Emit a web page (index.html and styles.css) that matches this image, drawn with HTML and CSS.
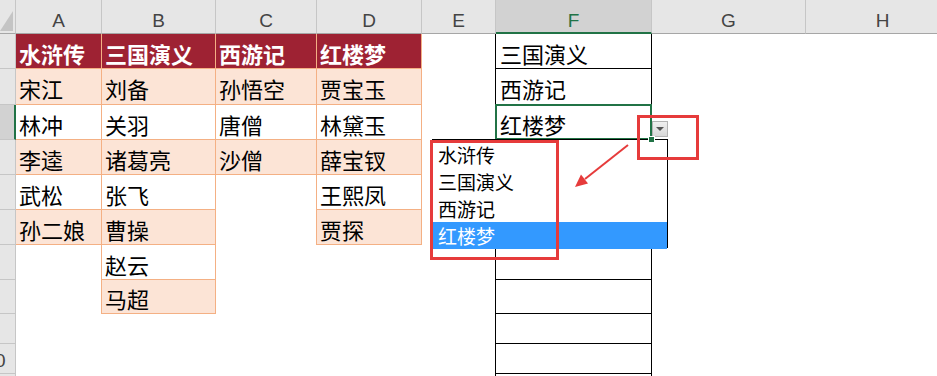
FILE: index.html
```html
<!DOCTYPE html>
<html lang="zh">
<head>
<meta charset="utf-8">
<link rel="stylesheet" href="styles.css">
</head>
<body>
<div class="page">
  <div class="sheet">
    <!-- column headers -->
    <div class="corner"><span class="tri"></span></div>
    <div class="ch">A</div><div class="ch">B</div><div class="ch">C</div><div class="ch">D</div><div class="ch">E</div><div class="ch sel">F</div><div class="ch">G</div><div class="ch">H</div>

    <!-- row 1 -->
    <div class="rh"></div>
    <div class="c hd">水浒传</div><div class="c hd">三国演义</div><div class="c hd">西游记</div><div class="c hd">红楼梦</div>
    <div class="c ef"></div><div class="c f">三国演义</div><div class="c"></div><div class="c"></div>

    <!-- row 2 -->
    <div class="rh"></div>
    <div class="c pe">宋江</div><div class="c pe">刘备</div><div class="c pe">孙悟空</div><div class="c pe">贾宝玉</div>
    <div class="c ef"></div><div class="c f">西游记</div><div class="c"></div><div class="c"></div>

    <!-- row 3 -->
    <div class="rh rsel"></div>
    <div class="c wh">林冲</div><div class="c wh">关羽</div><div class="c wh">唐僧</div><div class="c wh">林黛玉</div>
    <div class="c ef"></div><div class="c f act">红楼梦</div><div class="c"></div><div class="c"></div>

    <!-- row 4 -->
    <div class="rh"></div>
    <div class="c pe">李逵</div><div class="c pe">诸葛亮</div><div class="c pe">沙僧</div><div class="c pe">薛宝钗</div>
    <div class="c ef"></div><div class="c f"></div><div class="c"></div><div class="c"></div>

    <!-- row 5 -->
    <div class="rh"></div>
    <div class="c wh">武松</div><div class="c wh">张飞</div><div class="c vr"></div><div class="c wh">王熙凤</div>
    <div class="c ef"></div><div class="c f"></div><div class="c"></div><div class="c"></div>

    <!-- row 6 -->
    <div class="rh"></div>
    <div class="c pe">孙二娘</div><div class="c pe">曹操</div><div class="c vr"></div><div class="c pe">贾探</div>
    <div class="c ef"></div><div class="c f"></div><div class="c"></div><div class="c"></div>

    <!-- row 7 -->
    <div class="rh"></div>
    <div class="c vr"></div><div class="c wh">赵云</div><div class="c"></div><div class="c"></div>
    <div class="c ef"></div><div class="c f"></div><div class="c"></div><div class="c"></div>

    <!-- row 8 -->
    <div class="rh"></div>
    <div class="c vr"></div><div class="c pe">马超</div><div class="c"></div><div class="c"></div>
    <div class="c ef"></div><div class="c f"></div><div class="c"></div><div class="c"></div>

    <!-- row 9 -->
    <div class="rh"></div>
    <div class="c"></div><div class="c"></div><div class="c"></div><div class="c"></div>
    <div class="c ef"></div><div class="c f"></div><div class="c"></div><div class="c"></div>

    <!-- row 10 -->
    <div class="rh"><span>10</span></div>
    <div class="c"></div><div class="c"></div><div class="c"></div><div class="c"></div>
    <div class="c ef"></div><div class="c f"></div><div class="c"></div><div class="c"></div>

    <!-- row 11 -->
    <div class="rh"></div>
    <div class="c"></div><div class="c"></div><div class="c"></div><div class="c"></div>
    <div class="c ef"></div><div class="c f"></div><div class="c"></div><div class="c"></div>
  </div>

  <!-- overlays -->
  <div class="dd-btn"><span class="dd-tri"></span></div>
  <ul class="dd-list">
    <li>水浒传</li>
    <li>三国演义</li>
    <li>西游记</li>
    <li class="hl">红楼梦</li>
  </ul>
  <div class="mark mark-list"></div>
  <div class="mark mark-btn"></div>
  <svg class="arrow" width="937" height="376" viewBox="0 0 937 376">
    <line x1="628" y1="145" x2="585" y2="179" stroke="#e63b3b" stroke-width="2"/>
    <polygon points="575,187 588,183.5 581,174.5" fill="#e63b3b"/>
  </svg>
</div>
</body>
</html>
```

FILE: styles.css
```css
html, body {
  margin: 0;
  padding: 0;
  background: #fff;
}
body {
  width: 937px;
  height: 376px;
  overflow: hidden;
  font-family: "Noto Sans CJK SC", "Noto Sans", sans-serif;
}
.page {
  position: relative;
  width: 937px;
  height: 376px;
  overflow: hidden;
}
.sheet {
  display: grid;
  grid-template-columns: 16px 86px 114px 101px 105px 74px 156px 154px 154px;
  grid-template-rows: 34px 35px 36px 35px 35px 35px 35px 35px 34px 30px 30px 30px;
  width: 995px;
}
.corner {
  background: #e6e6e6;
  border-right: 1px solid #c6c6c6;
  border-bottom: 1px solid #a6a6a6;
  box-sizing: border-box;
  display: flex;
  align-items: flex-end;
  justify-content: flex-end;
  padding: 0 2px 2px 0;
}
.tri {
  display: block;
  width: 13px;
  height: 20px;
  background: #c4c4c4;
  clip-path: polygon(100% 0, 100% 100%, 0 100%);
}
.ch {
  box-sizing: border-box;
  background: #e6e6e6;
  border-right: 1px solid #c6c6c6;
  border-bottom: 1px solid #a6a6a6;
  font-family: "Liberation Sans", Arial, sans-serif;
  font-size: 19px;
  color: #444;
  display: flex;
  align-items: center;
  justify-content: center;
  padding-top: 9px;
}
.ch.sel {
  background: #d2d2d2;
  color: #217346;
  border-bottom: 2px solid #217346;
}
.rh {
  box-sizing: border-box;
  background: #e6e6e6;
  border-right: 1px solid #c6c6c6;
  border-bottom: 1px solid #c6c6c6;
  overflow: hidden;
  display: flex;
  align-items: center;
  font-family: "Liberation Sans", Arial, sans-serif;
  font-size: 19px;
  color: #444;
}
.rh span {
  flex: 0 0 40px;
  margin-left: -25px;
  text-align: center;
  padding-top: 4px;
}
.rh.rsel {
  background: #d2d2d2;
  border-right: 2px solid #217346;
}
.c {
  box-sizing: border-box;
  display: flex;
  align-items: center;
  padding: 3px 0 0 3px;
  font-size: 22px;
  color: #000;
  white-space: nowrap;
  background: #fff;
}
.hd {
  background: #9e2233;
  color: #fff;
  font-weight: 700;
  border-right: 1px solid #f4b084;
  border-bottom: 1px solid #f4b084;
}
.pe {
  background: #fce4d6;
  border-right: 1px solid #f4b084;
  border-bottom: 1px solid #f4b084;
}
.wh {
  border-right: 1px solid #f4b084;
  border-bottom: 1px solid #f4b084;
}
.vr {
  border-right: 1px solid #f4b084;
}
.ef {
  border-right: 1px solid #000;
}
.f {
  border-right: 1px solid #000;
  border-bottom: 1px solid #000;
  padding-left: 4px;
}
.act {
  position: relative;
}
.act::after {
  content: "";
  position: absolute;
  left: -1px;
  top: -1px;
  right: -1px;
  bottom: -1px;
  border: 2px solid #217346;
}
.act::before {
  content: "";
  position: absolute;
  right: -4px;
  bottom: -4px;
  width: 5px;
  height: 5px;
  background: #217346;
  border: 1px solid #fff;
  z-index: 2;
}
.dd-btn {
  position: absolute;
  left: 652px;
  top: 121px;
  width: 16px;
  height: 16px;
  box-sizing: border-box;
  border: 1px solid #b4b4b4;
  background: linear-gradient(#f0f0f0, #d8d8d8);
  display: flex;
  align-items: center;
  justify-content: center;
}
.dd-tri {
  width: 0;
  height: 0;
  border-left: 4px solid transparent;
  border-right: 4px solid transparent;
  border-top: 4px solid #555;
}
.dd-list {
  position: absolute;
  left: 432px;
  top: 139px;
  width: 236px;
  height: 109px;
  box-sizing: border-box;
  margin: 0;
  padding: 1px 0 0 0;
  list-style: none;
  background: #fff;
  border: 1px solid #000;
  font-size: 19px;
}
.dd-list li {
  height: 27px;
  line-height: 27px;
  padding-left: 5px;
  color: #000;
}
.dd-list li.hl {
  background: #3399ff;
  color: #fff;
}
.mark {
  position: absolute;
  border: 3px solid #e63b3b;
  box-sizing: border-box;
}
.mark-list {
  left: 430px;
  top: 140px;
  width: 129px;
  height: 120px;
}
.mark-btn {
  left: 637px;
  top: 115px;
  width: 62px;
  height: 45px;
}
.arrow {
  position: absolute;
  left: 0;
  top: 0;
  pointer-events: none;
}
```
